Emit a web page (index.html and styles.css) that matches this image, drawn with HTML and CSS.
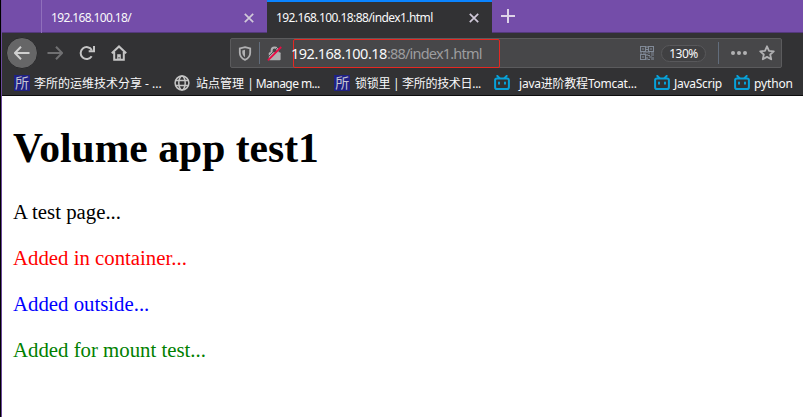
FILE: index.html
```
<!DOCTYPE html>
<html lang="zh-CN">
<head>
<meta charset="utf-8">
<title>192.168.100.18:88/index1.html</title>
<link rel="stylesheet" href="styles.css">
</head>
<body>
<svg class="defs" width="0" height="0">
  <symbol id="bili" viewBox="0 0 16 16"><path d="M3.3.9 5.3 3M12.7.9 10.7 3" /><rect x="1.1" y="3.4" width="13.8" height="10.6" rx="1.8"/><path d="M5 7.4v1.4M11 7.4v1.4"/></symbol>
  <symbol id="close" viewBox="0 0 10 10"><path d="M.8.8l8.4 8.4M9.2.8.8 9.2"/></symbol>
</svg>
<div class="window">
  <div class="tabs">
    <div class="tab-spacer"></div>
    <div class="tab"><span class="tab-title first">192.168.100.18/</span><svg class="close"><use href="#close"/></svg></div>
    <div class="tab active"><span class="tab-title second">192.168.100.18:88/index1.html</span><svg class="close"><use href="#close"/></svg></div>
    <svg class="new-tab" viewBox="0 0 14 14"><path d="M7 0v14M0 7h14"/></svg>
  </div>
  <div class="toolbar">
    <div class="back"><svg viewBox="0 0 16 16"><path d="M15.5 8H1M7 1.8.9 8 7 14.2"/></svg></div>
    <svg class="nav forward" viewBox="0 0 16 16"><path d="M.5 8H15M9 1.8 15.1 8 9 14.2"/></svg>
    <svg class="nav reload" viewBox="0 0 16 16"><path d="M12.7 11.3A6 6 0 1 1 12.8 5M15 1v5.3H9.7"/></svg>
    <svg class="nav home" viewBox="0 0 16 16"><path d="M.8 8.2 8 1.4l7.2 6.8M3.2 7v7.7h9.6V7"/><path class="door" d="M6.2 15V9.2h3.6V15z"/><path d="M8 12v1.5" class="knob"/></svg>
    <div class="urlbar">
      <svg class="shield" viewBox="0 0 14 15"><path d="M7 1.1 12.2 2.5v4.2c0 3-1.7 5.6-5.2 7.1-3.5-1.5-5.2-4.1-5.2-7.1V2.5z"/><path class="half" d="M7 3.7v7.6C5.1 10 4.3 8.5 4.3 6.6V4.4z"/></svg>
      <i class="divider"></i>
      <svg class="lock" viewBox="0 0 15 15"><path class="arch" d="M4.6 7V4.4a3 3 0 0 1 6 0V7"/><rect x="1.8" y="6.3" width="11.8" height="7.9" rx="1"/><path class="gap" d="M-.8 12.9 11.9.2"/><path class="slash" d="M.9 14.3 14.2 1"/></svg>
      <div class="address"><b>192.168.100.18</b>:88/index1.html</div>
      <svg class="qr" viewBox="0 0 14 14"><path d="M.5.5h5v5h-5zM8.5.5h5v5h-5zM.5 8.5h5v5h-5zM2 3h2M10 3h2M2 11h2M7 0v2M6 3.5h2M7 5v2M0 7h2M3 7h3M8 7h2M11 7h3M7 8v2M8 9.5h2M11 9h3M9 11h3M7 11v3M8 13.5h2M11 13h1M13 11v3"/></svg>
      <span class="zoom">130%</span>
      <i class="divider right"></i>
      <svg class="dots" viewBox="0 0 16 4"><circle cx="2" cy="2" r="2"/><circle cx="8" cy="2" r="2"/><circle cx="14" cy="2" r="2"/></svg>
      <svg class="star" viewBox="0 0 16 16"><path d="M8 1.3 10 5.8l4.8.5-3.6 3.2 1 4.8L8 11.9l-4.2 2.4 1-4.8L1.2 6.3 6 5.8z"/></svg>
    </div>
  </div>
  <div class="bookmarks">
    <div class="bm b1"><span class="suo">所</span><span class="label">李所的运维技术分享 - ...</span></div>
    <div class="bm b2"><svg class="globe" viewBox="0 0 16 16"><circle cx="8" cy="8" r="6.9"/><ellipse cx="8" cy="8" rx="3.2" ry="6.9"/><path d="M1.8 5.5h12.4M1.8 10.5h12.4"/></svg><span class="label">站点管理 <span class="latin">| Manage m...</span></span></div>
    <div class="bm b3"><span class="suo">所</span><span class="label">锁锁里 | 李所的技术日...</span></div>
    <div class="bm b4"><svg class="bili"><use href="#bili"/></svg><span class="label">java进阶教程Tomcat...</span></div>
    <div class="bm b5"><svg class="bili"><use href="#bili"/></svg><span class="label">JavaScrip</span></div>
    <div class="bm b6"><svg class="bili"><use href="#bili"/></svg><span class="label">python</span></div>
  </div>
  <main class="page">
    <h1>Volume app test1</h1>
    <p>A test page...</p>
    <p class="red">Added in container...</p>
    <p class="blue">Added outside...</p>
    <p class="green">Added for mount test...</p>
  </main>
</div>
</body>
</html>
```
FILE: styles.css
```
* { box-sizing: border-box; }
body { margin: 0; overflow: hidden; background: #fff; }
svg { display: block; flex: none; fill: none; }
.defs { position: absolute; }
.window {
  height: 417px;
  border-left: 1px solid #000;
  box-shadow: inset 1px 0 #6b4a9b;
  padding-left: 1px;
  font-family: "Noto Sans", "Noto Sans CJK SC", sans-serif;
  font-size: 12px;
  color: #f9f9fa;
}
.tabs { display: flex; height: 33px; background: #744da9; box-shadow: inset 0 -1px #54397c; }
.tab-spacer { width: 40px; border-right: 1px solid #906fbc; }
.tab { display: flex; align-items: center; width: 225px; padding: 2px 13px 0 9px; justify-content: space-between; }
.tab.active { background: #323234; border-top: 2px solid #0a84ff; padding-top: 0; }
.tab-title { white-space: nowrap; line-height: 18px; }
.first { letter-spacing: -.63px; }
.second { letter-spacing: -.58px; }
.close { width: 10px; height: 10px; stroke: #d0c9d9; stroke-width: 1.7; }
.new-tab { width: 14px; height: 14px; margin: 9px 0 0 9px; stroke: #ddd3e8; stroke-width: 2; }
.toolbar { display: flex; align-items: center; height: 41px; background: #323234; padding: 0 0 1px 4px; }
.back { width: 32px; height: 32px; border: 1px solid #29292b; border-radius: 50%; background: #666667; display: grid; place-items: center; }
.back svg { width: 16px; height: 16px; stroke: #d0d0d0; stroke-width: 2; }
.nav { width: 16px; height: 16px; stroke: #c5c5c5; stroke-width: 2; }
.forward { margin-left: 9px; stroke: #707072; }
.reload { margin-left: 16px; }
.home { margin-left: 16px; }
.door { fill: #c5c5c5; stroke: none; }
.knob { stroke: #323234; stroke-width: 1; }
.urlbar { display: flex; align-items: center; flex: none; width: 552px; height: 30px; margin-left: 103px; border: 1px solid #5b5b5d; border-radius: 2px; background: #474749; }
.shield { width: 14px; height: 15px; margin-left: 7px; stroke: #b1b1b3; stroke-width: 1.8; }
.half { fill: #b1b1b3; stroke: none; }
.divider { width: 1px; height: 22px; margin-left: 7px; background: #626d7c; }
.lock { width: 15px; height: 15px; margin-left: 7px; fill: #b1b1b3; }
.arch { stroke: #b1b1b3; stroke-width: 2; fill: none; }
.gap { stroke: #474749; stroke-width: 1; }
.slash { stroke: #e90b45; stroke-width: 1.8; }
.address { flex: none; width: 207px; height: 29px; margin: 0 0 -1px 11px; border: 1px solid #e52822; border-radius: 2px; line-height: 27px; font-size: 14.5px; letter-spacing: -.8px; text-indent: -3px; white-space: nowrap; color: #9d9d9f; }
.address b { font-weight: 400; letter-spacing: -.5px; color: #f9f9fa; }
.qr { width: 14px; height: 14px; margin-left: 140px; stroke: #818a97; stroke-width: 1.1; }
.zoom { width: 45px; height: 17px; margin-left: 7px; border: 1px solid #58585b; border-radius: 9px; background: #404042; text-align: center; line-height: 15px; letter-spacing: -.5px; }
.divider.right { margin-left: 12px; }
.dots { width: 16px; height: 4px; margin-left: 12px; fill: #b1b1b3; }
.star { width: 16px; height: 16px; margin-left: 12px; stroke: #b1b1b3; stroke-width: 1.8; stroke-linejoin: round; }
.bookmarks { display: flex; height: 22px; padding-left: 12px; background: #323234; border-bottom: 1px solid #0c0c0d; }
.bm { display: flex; align-items: center; flex: none; height: 18px; gap: 4px; }
.label { line-height: 18px; padding-top: 2px; white-space: nowrap; }
.suo { width: 16px; height: 16px; flex: none; background: #202184; color: #c4c4d2; font: 14px/15px "Noto Sans CJK SC", sans-serif; text-align: center; }
.globe { width: 16px; height: 16px; stroke: #c5c5c5; stroke-width: 1.5; }
.bili { width: 16px; height: 16px; stroke: #08a1d8; stroke-width: 2; stroke-linecap: round; }
.b1 { width: 160px; }
.b2 { width: 160px; gap: 6px; }
.latin { letter-spacing: -.55px; }
.b3 { width: 160px; gap: 5px; letter-spacing: -.3px; }
.b4 { width: 160px; gap: 9px; letter-spacing: -.22px; }
.b5 { width: 80px; letter-spacing: -.3px; }
.b6 { width: 60px; letter-spacing: -.15px; }
.page { padding: 28px 11px 0; font-family: "Liberation Serif", serif; font-size: 20.8px; line-height: 24px; color: #000; }
h1 { margin: 0 0 28px; font-size: 41.6px; line-height: 48px; }
p { margin: 0 0 22px; }
.red { color: #f00; }
.blue { color: #00f; }
.green { color: #008000; }
```
